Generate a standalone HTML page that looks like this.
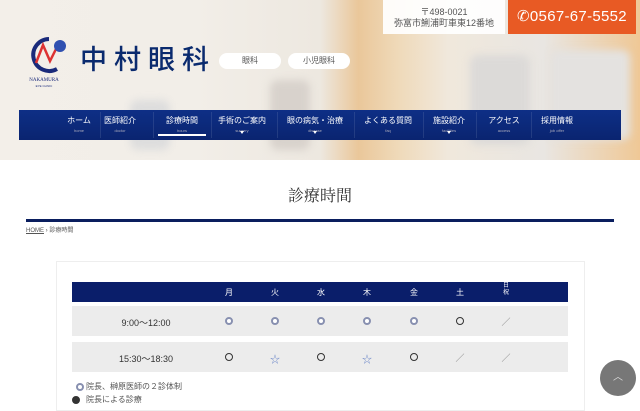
<!DOCTYPE html>
<html><head><meta charset="utf-8"><style>
*{margin:0;padding:0;box-sizing:border-box}
body{width:640px;height:400px;overflow:hidden;background:#fff;font-family:"Liberation Sans","Noto Sans CJK JP",sans-serif;position:relative}
.hero{position:absolute;left:0;top:0;width:640px;height:160px;background:linear-gradient(90deg,#f3efe9 0%,#f2eee8 30%,#ede8e0 50%,#eac79a 56%,#efd9b8 62%,#f0e8dc 70%,#e9e6e2 85%,#efc896 100%)}
.blob{position:absolute;border-radius:8px;filter:blur(4px)}
.addr{position:absolute;left:383px;top:0;width:122px;height:34px;background:rgba(255,255,255,.92);text-align:center;font-size:9px;color:#555;line-height:11px;padding-top:7px}
.tel{position:absolute;left:508px;top:0;width:128px;height:34px;background:#e85a24;color:#fff;font-size:15px;text-align:center;line-height:34px;letter-spacing:.3px}
.logo{position:absolute;left:27px;top:33px}
.name{position:absolute;left:80px;top:38px;font-size:27px;color:#0a2a6e;letter-spacing:7px;font-weight:500}
.pill{position:absolute;top:53px;height:16px;background:#fff;border-radius:8px;font-size:8px;color:#555;text-align:center;line-height:16px}
.nav{position:absolute;left:19px;top:110px;width:602px;height:30px;background:linear-gradient(#0e2f86,#0a2470)}
.ni{position:absolute;top:0;height:30px;color:#fff;font-size:8px;text-align:center;padding-top:5px;transform:translateX(-50%);white-space:nowrap}
.ni small{display:block;font-size:4px;color:#aab;margin-top:2px}
.dd:after{content:"";position:absolute;left:50%;bottom:4px;margin-left:-2px;border:2px solid transparent;border-top:3px solid #fff}
.sep{position:absolute;top:2px;width:1px;height:26px;background:rgba(255,255,255,.1)}
.title{position:absolute;top:183px;width:640px;text-align:center;font-family:"Liberation Serif","Noto Serif CJK SC",serif;font-size:16px;color:#333}
.line{position:absolute;left:26px;top:219px;width:588px;height:3px;background:#0a1e5e}
.bc{position:absolute;left:26px;top:225px;font-size:6px;color:#555}
.card{position:absolute;left:56px;top:261px;width:529px;height:150px;border:1px solid #eee;background:#fff}
.th{position:absolute;left:72px;top:282px;width:496px;height:20px;background:#0a1e6a}
.row{position:absolute;left:72px;width:496px;height:30px;background:#ececec}
.c{position:absolute;font-size:9px;color:#333;transform:translateX(-50%)}
.o{position:absolute;width:8px;height:8px;border-radius:50%;border:1.5px solid #333;transform:translateX(-50%)}
.o2{border:2.5px solid #8890b0;background:#fff}
.star{color:#6a86c8;font-size:10px}
.top{position:absolute;left:600px;top:360px;width:36px;height:36px;border-radius:50%;background:#777;color:#ddd;text-align:center;line-height:36px;font-size:10px}
</style></head><body>
<div class="hero">
<div class="blob" style="left:130px;top:100px;width:40px;height:50px;background:#ddd"></div>
<div class="blob" style="left:270px;top:80px;width:40px;height:70px;background:#d8d2cc"></div>
<div class="blob" style="left:470px;top:55px;width:60px;height:90px;background:#dcdad8"></div>
<div class="blob" style="left:550px;top:50px;width:80px;height:90px;background:#e4e2e0"></div>
</div>
<div class="addr">〒498-0021<br>弥富市鯏浦町車東12番地</div>
<div class="tel">&#x2706;0567-67-5552</div>
<svg class="logo" width="44" height="64" viewBox="0 0 44 64">
<path d="M22 6 A16 16 0 1 0 30 36" fill="none" stroke="#1a2a7a" stroke-width="4"/>
<path d="M9 30 L16 12 L23 28 L29 16" fill="none" stroke="#d33" stroke-width="2.5"/>
<circle cx="33" cy="13" r="6" fill="#3050b0"/>
<text x="17" y="48" font-size="5" fill="#1a2a7a" text-anchor="middle" font-family="Liberation Serif">NAKAMURA</text>
<text x="17" y="54" font-size="3" fill="#1a2a7a" text-anchor="middle">EYE CLINIC</text>
</svg>
<div class="name">中村眼科</div>
<div class="pill" style="left:219px;width:62px">眼科</div>
<div class="pill" style="left:288px;width:62px">小児眼科</div>
<div class="nav">
<div class="ni" style="left:60px">ホーム<small>home</small></div>
<div class="sep" style="left:81px"></div>
<div class="ni" style="left:101px">医師紹介<small>doctor</small></div>
<div class="sep" style="left:134px"></div>
<div class="ni" style="left:163px">診療時間<small>hours</small></div>
<div style="position:absolute;left:139px;top:24px;width:48px;height:2px;background:#fff"></div>
<div class="sep" style="left:192px"></div>
<div class="ni dd" style="left:223px">手術のご案内<small>surgery</small></div>
<div class="sep" style="left:258px"></div>
<div class="ni dd" style="left:296px">眼の病気・治療<small>disease</small></div>
<div class="sep" style="left:335px"></div>
<div class="ni" style="left:369px">よくある質問<small>faq</small></div>
<div class="sep" style="left:404px"></div>
<div class="ni dd" style="left:430px">施設紹介<small>facilities</small></div>
<div class="sep" style="left:457px"></div>
<div class="ni" style="left:485px">アクセス<small>access</small></div>
<div class="sep" style="left:512px"></div>
<div class="ni" style="left:538px">採用情報<small>job offer</small></div>
</div>
<div class="title">診療時間</div>
<div class="line"></div>
<div class="bc"><u>HOME</u> › 診療時間</div>
<div class="card"></div>
<div class="th"></div>
<div class="c" style="left:229px;top:287px;color:#fff;font-size:8px">月</div>
<div class="c" style="left:275px;top:287px;color:#fff;font-size:8px">火</div>
<div class="c" style="left:321px;top:287px;color:#fff;font-size:8px">水</div>
<div class="c" style="left:367px;top:287px;color:#fff;font-size:8px">木</div>
<div class="c" style="left:414px;top:287px;color:#fff;font-size:8px">金</div>
<div class="c" style="left:460px;top:287px;color:#fff;font-size:8px">土</div>
<div class="c" style="left:506px;top:283px;color:#fff;font-size:6px;line-height:7px">日<br>祝</div>
<div class="row" style="top:306px"></div>
<div class="row" style="top:342px"></div>
<div class="c" style="left:146px;top:316px">9:00〜12:00</div>
<div class="c" style="left:146px;top:352px">15:30〜18:30</div>
<div class="o o2" style="left:229px;top:317px"></div>
<div class="o o2" style="left:275px;top:317px"></div>
<div class="o o2" style="left:321px;top:317px"></div>
<div class="o o2" style="left:367px;top:317px"></div>
<div class="o o2" style="left:414px;top:317px"></div>
<div class="o" style="left:460px;top:317px"></div>
<div class="c" style="left:506px;top:315px;color:#777">／</div>
<div class="o" style="left:229px;top:353px"></div>
<div class="c star" style="left:275px;top:351px">☆</div>
<div class="o" style="left:321px;top:353px"></div>
<div class="c star" style="left:367px;top:351px">☆</div>
<div class="o" style="left:414px;top:353px"></div>
<div class="c" style="left:460px;top:351px;color:#777">／</div>
<div class="c" style="left:506px;top:351px;color:#777">／</div>
<div class="o o2" style="left:76px;top:383px;transform:none"></div>
<div style="position:absolute;left:86px;top:381px;font-size:8px;color:#555">院長、榊原医師の２診体制</div>
<div class="o" style="left:72px;top:396px;transform:none;background:#333"></div>
<div style="position:absolute;left:86px;top:394px;font-size:8px;color:#555">院長による診療</div>
<div class="top">︿</div>
</body></html>
